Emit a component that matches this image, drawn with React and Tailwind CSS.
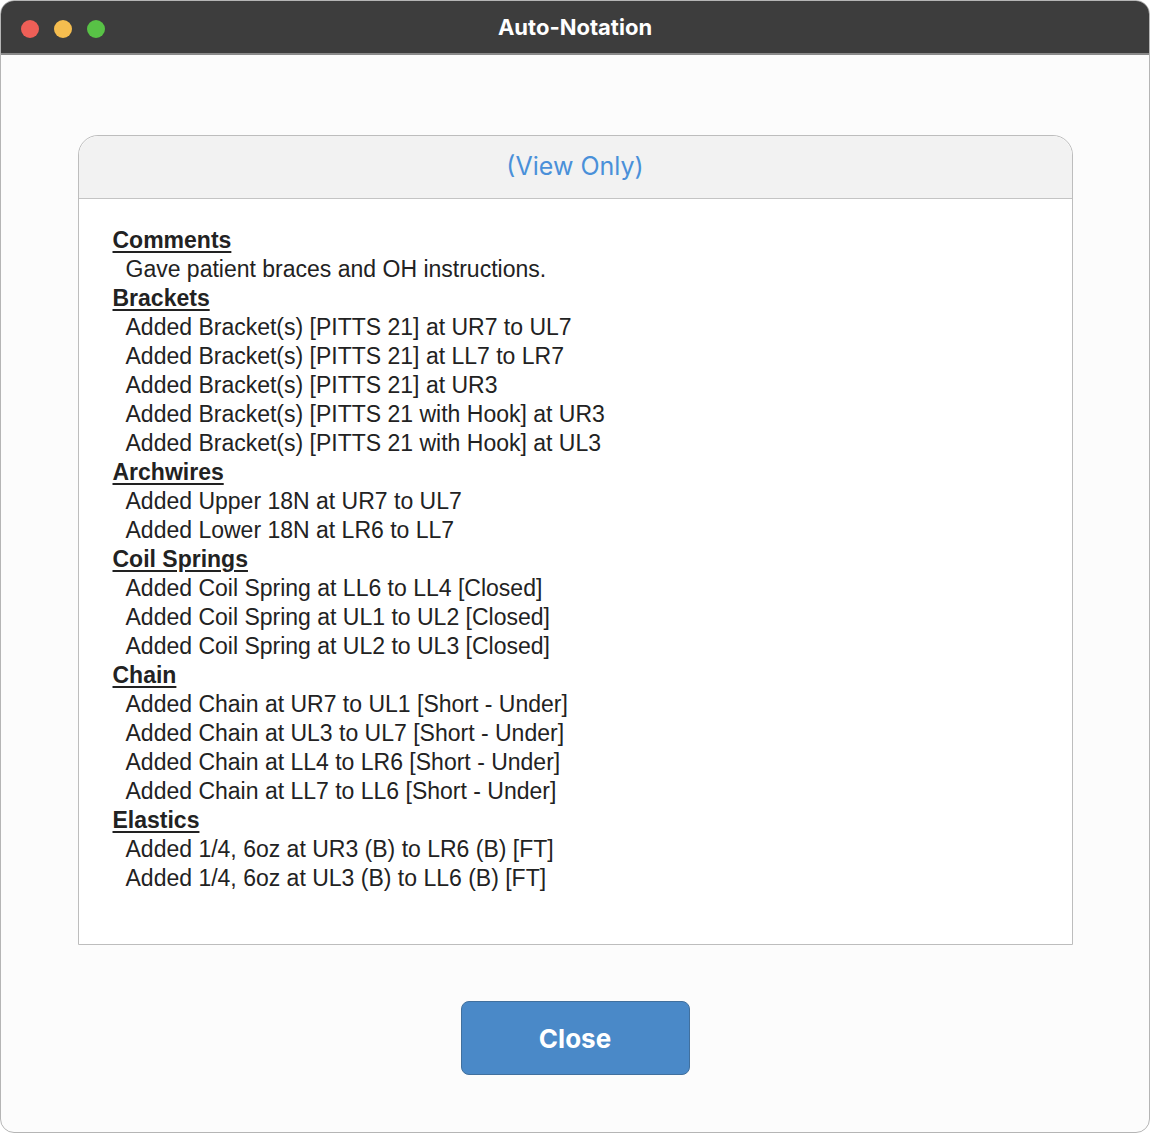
const sections = [
  ["Comments", ["Gave patient braces and OH instructions."]],
  ["Brackets", [
    "Added Bracket(s) [PITTS 21] at UR7 to UL7",
    "Added Bracket(s) [PITTS 21] at LL7 to LR7",
    "Added Bracket(s) [PITTS 21] at UR3",
    "Added Bracket(s) [PITTS 21 with Hook] at UR3",
    "Added Bracket(s) [PITTS 21 with Hook] at UL3",
  ]],
  ["Archwires", ["Added Upper 18N at UR7 to UL7", "Added Lower 18N at LR6 to LL7"]],
  ["Coil Springs", [
    "Added Coil Spring at LL6 to LL4 [Closed]",
    "Added Coil Spring at UL1 to UL2 [Closed]",
    "Added Coil Spring at UL2 to UL3 [Closed]",
  ]],
  ["Chain", [
    "Added Chain at UR7 to UL1 [Short - Under]",
    "Added Chain at UL3 to UL7 [Short - Under]",
    "Added Chain at LL4 to LR6 [Short - Under]",
    "Added Chain at LL7 to LL6 [Short - Under]",
  ]],
  ["Elastics", ["Added 1/4, 6oz at UR3 (B) to LR6 (B) [FT]", "Added 1/4, 6oz at UL3 (B) to LL6 (B) [FT]"]],
];

export default function App() {
  return (
    <div className="w-[1150px] h-[1133px] bg-white" style={{ fontFamily: '"Liberation Sans", Arial, sans-serif' }}>
      <div className="w-[1150px] h-[1133px] rounded-[14px] overflow-hidden border border-[#b5b5b5] bg-[#fcfcfc] flex flex-col">
        <div className="h-[54px] shrink-0 bg-[#3d3d3d] border-b-2 border-[#8a8a8a] relative flex items-center justify-center">
          <div className="absolute left-[20px] top-[19px] flex gap-[15px]">
            <span className="w-[18px] h-[18px] rounded-full bg-[#ee5f57]" />
            <span className="w-[18px] h-[18px] rounded-full bg-[#f5bd4f]" />
            <span className="w-[18px] h-[18px] rounded-full bg-[#58c246]" />
          </div>
          <span className="text-white font-bold text-[22px]" style={{ fontFamily: 'Inter, "Liberation Sans", sans-serif' }}>Auto-Notation</span>
        </div>
        <div className="flex flex-col items-center pt-[80px]">
          <div className="w-[995px] h-[810px] border border-[#bdbdbd] rounded-t-[20px] bg-white flex flex-col">
            <div className="h-[63px] shrink-0 bg-[#f2f2f2] rounded-t-[20px] border-b border-[#c4c4c4] flex items-center justify-center text-[#4a90d9] text-[25px]" style={{ fontFamily: 'Inter, "Liberation Sans", sans-serif' }}>(View Only)</div>
            <div className="pl-[34px] pt-[27px] text-[23px] leading-[29px] text-[#222]">
              {sections.map(([h, items]) => (
                <div key={h}>
                  <div className="font-bold underline underline-offset-[3px]">{h}</div>
                  {items.map((t) => (
                    <div key={t} className="pl-[13px]">{t}</div>
                  ))}
                </div>
              ))}
            </div>
          </div>
          <button className="mt-[56px] w-[229px] h-[74px] rounded-lg bg-[#4a89c8] border border-[#41709e] text-white font-bold text-[26px]" style={{ fontFamily: 'Inter, "Liberation Sans", sans-serif' }}>Close</button>
        </div>
      </div>
    </div>
  );
}
